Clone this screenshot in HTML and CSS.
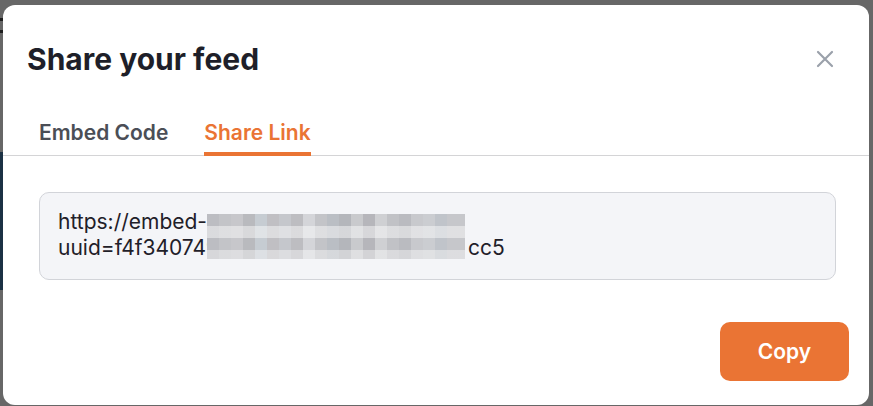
FILE: index.html
```html
<!DOCTYPE html>
<html lang="en">
<head>
<meta charset="utf-8">
<title>Share your feed</title>
<link rel="stylesheet" href="styles.css">
</head>
<body>
<div class="backdrop">
  <div class="modal">
    <div class="modal-header">
      <h2 class="title">Share your feed</h2>
      <button class="close" aria-label="Close">
        <svg width="18" height="18" viewBox="0 0 18 18"><path d="M2 2 L16 16 M16 2 L2 16" stroke="#9ba1ab" stroke-width="2.2" stroke-linecap="round" fill="none"/></svg>
      </button>
    </div>
    <div class="tabs">
      <div class="tab">Embed Code</div>
      <div class="tab active">Share Link</div>
    </div>
    <div class="body">
      <div class="link-box">
        <div class="link-text">https://embed-<span class="hidden">xxxxxxxxxxxxxxxxxxxx</span><br>uuid=f4f340749<span class="hidden hidden-2">xxxxxxxxxxxxxxxxxxxx</span>cc5</div>
        <div class="mosaic"></div>
      </div>
    </div>
    <div class="footer">
      <button class="copy">Copy</button>
    </div>
  </div>
</div>
</body>
</html>
```
FILE: styles.css
```css
html, body {
  margin: 0;
  padding: 0;
  height: 100%;
  overflow: hidden;
}
body {
  font-family: Inter, "Noto Sans", Arial, sans-serif;
  background-color: #676767;
  background-image:
    linear-gradient(#1b3144, #1b3144),
    linear-gradient(#1e1e1e, #1e1e1e),
    linear-gradient(#1e1e1e, #1e1e1e);
  background-size: 3px 138px, 3px 3px, 3px 3px;
  background-position: 0 152px, 0 18px, 0 30px;
  background-repeat: no-repeat;
}
.backdrop {
  padding: 5px 4px 0 3px;
}
.modal {
  background: #fff;
  border-radius: 12px;
  height: 400px;
  box-sizing: border-box;
  padding-top: 36px;
}
.modal-header {
  display: flex;
  align-items: center;
  justify-content: space-between;
  padding: 0 35px 0 24px;
}
.title {
  margin: 0;
  font-size: 30px;
  line-height: 36px;
  font-weight: 700;
  color: #1e1f29;
}
.close {
  background: none;
  border: 0;
  padding: 0;
  width: 18px;
  height: 18px;
  display: flex;
  cursor: pointer;
}
.tabs {
  display: flex;
  gap: 36px;
  padding: 0 36px;
  margin-top: 38px;
  border-bottom: 1px solid #d4d4d6;
}
.tab {
  font-size: 21px;
  line-height: 26px;
  font-weight: 600;
  color: #4b4e56;
  padding: 5px 0 6px;
  border-bottom: 4px solid transparent;
  margin-bottom: -1px;
}
.tab.active {
  color: #ea7434;
  border-bottom-color: #ea7434;
}
.body {
  padding: 36px 33px 0 36px;
}
.link-box {
  position: relative;
  background: #f4f5f8;
  border: 1px solid #d2d4d9;
  border-radius: 10px;
  padding: 16px 18px 18px;
}
.link-text {
  font-size: 21px;
  line-height: 26px;
  color: #1f2029;
  white-space: nowrap;
  overflow: hidden;
}
.hidden {
  display: inline-block;
  width: 258px;
  overflow: hidden;
  color: transparent;
  vertical-align: bottom;
  height: 26px;
}
.hidden-2 {
  width: 249px;
}
.mosaic {
  position: absolute;
  left: 167px;
  top: 21px;
  width: 258px;
  height: 45px;
  background-image:
    linear-gradient(rgba(255,255,255,0) 0 12px, rgba(255,255,255,0.45) 12px 24px, rgba(255,255,255,0) 24px 36px, rgba(255,255,255,0.4) 36px),
    linear-gradient(90deg,
      #bcbdc2 0 12px, #c3c4c8 12px 24px, #c7c7cb 24px 36px, #b9babe 36px 48px,
      #c6ccd2 48px 60px, #c0bfc3 60px 72px, #c5c7cc 72px 84px, #bdbdc1 84px 96px,
      #d4d5d9 96px 108px, #c3c4c8 108px 120px, #babec4 120px 132px, #b4b6bb 132px 144px,
      #c9cacd 144px 156px, #b6b6bb 156px 168px, #cfd0d3 168px 180px, #c1c2c6 180px 192px,
      #babbc0 192px 204px, #c8c9cd 204px 216px, #cbcdd1 216px 228px, #c0c4ca 228px 240px,
      #c6c7cb 240px 258px);
}
.footer {
  display: flex;
  justify-content: flex-end;
  padding: 42px 20px 0 0;
}
.copy {
  width: 129px;
  height: 59px;
  background: #ea7434;
  color: #fff;
  border: 0;
  border-radius: 10px;
  font-family: Inter, "Noto Sans", Arial, sans-serif;
  font-size: 21px;
  font-weight: 600;
  cursor: pointer;
}
```
